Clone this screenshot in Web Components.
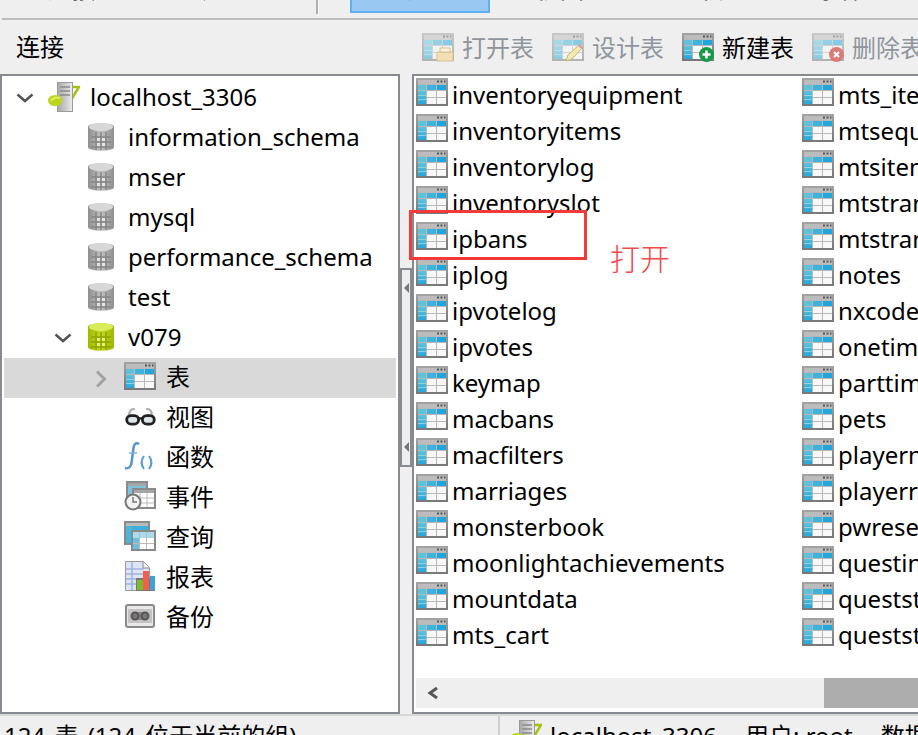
<!DOCTYPE html>
<html>
<head>
<meta charset="utf-8">
<style>
  html, body { margin: 0; height: 100%; overflow: hidden; background: #efefef; }
  body { font-family: "Noto Sans", "Noto Sans CJK SC", sans-serif; font-size: 24px; color: #000; }
</style>
</head>
<body>
<nav-app></nav-app>
<script>
const TABLE_ICON = (dim) => `
  <svg width="32" height="28" viewBox="0 0 32 28" style="opacity:${dim ? .5 : 1}">
    <defs>
      <linearGradient id="frame" x1="0" y1="0" x2="0" y2="1"><stop offset="0" stop-color="#a3a3a3"/><stop offset="1" stop-color="#777"/></linearGradient>
      <linearGradient id="leftcol" x1="0" y1="0" x2="0" y2="1"><stop offset="0" stop-color="#5fc2dc"/><stop offset="1" stop-color="#2aa6d8"/></linearGradient>
    </defs>
    <rect width="32" height="28" fill="url(#frame)"/>
    <rect x="2" y="2" width="28" height="4" fill="#bcbcbc"/>
    <path d="M21 3.500h2M24.500 3.500h2M28 3.500h1.500" stroke="#555" stroke-width="2"/>
    <rect x="2" y="6" width="28" height="20" fill="#b8b8b8"/>
    <rect x="2" y="7" width="8" height="5" fill="#5fc2dc"/>
    <rect x="11" y="7" width="9" height="5" fill="#3cb2dc"/>
    <rect x="21" y="7" width="9" height="5" fill="#1fa6dd"/>
    <rect x="2" y="13" width="8" height="13" fill="url(#leftcol)"/>
    <path d="M2 17.500h8M2 21.500h8" stroke="#8fd0e4"/>
    <rect x="11" y="13" width="9" height="6" fill="#f8f8f8"/>
    <rect x="21" y="13" width="9" height="6" fill="#f8f8f8"/>
    <rect x="11" y="20" width="9" height="6" fill="#f8f8f8"/>
    <rect x="21" y="20" width="9" height="6" fill="#f8f8f8"/>
  </svg>`;

const DB_ICON = (color) => {
  const c = color === 'green'
    ? { a: '#9cb800', m: '#c4dc22', b: '#d8ec5c', c: '#8ea400', h: '#e2f27a' }
    : { a: '#8e8e8e', m: '#c2c2c2', b: '#d8d8d8', c: '#858585', h: '#e4e4e4' };
  return `<svg width="26" height="30" viewBox="0 0 26 30">
    <defs><linearGradient id="cyl" x1="0" y1="0" x2="1" y2="0"><stop offset="0" stop-color="${c.a}"/><stop offset=".5" stop-color="${c.m}"/><stop offset="1" stop-color="${c.a}"/></linearGradient></defs>
    <path d="M0 5C0 0 26 0 26 5V25C26 30 0 30 0 25Z" fill="url(#cyl)"/>
    <ellipse cx="13" cy="5" rx="12" ry="4" fill="${c.b}"/>
    <path d="M8 10v18M13 10v18M18 10v18" stroke="${c.c}" stroke-width="1.500" fill="none"/>
    <path d="M3 15h20M3 20h20M3 25h20" stroke="${c.c}" stroke-width="1.500" fill="none"/>
    <path d="M9 16h3v3h-3zM14 16h3v3h-3zM9 21h3v3h-3zM14 21h3v3h-3z" fill="${c.h}"/>
  </svg>`;
};

const SERVER_ICON = (w, h) => `<svg width="${w}" height="${h}" viewBox="0 0 32 30">
    <defs><linearGradient id="tower" x1="0" y1="0" x2="1" y2="0"><stop offset="0" stop-color="#a8a8a8"/><stop offset=".6" stop-color="#cfcfcf"/><stop offset="1" stop-color="#eee"/></linearGradient></defs>
    <path d="M22 5h9l-8 13" fill="none" stroke="#a9c010" stroke-width="2.500"/>
    <rect x="9.500" y="0.500" width="15" height="29" fill="url(#tower)" stroke="#9a9a9a"/>
    <path d="M12 5h10M12 9h10M12 13h10" stroke="#8a8a8a" stroke-width="1.500"/>
    <ellipse cx="7" cy="18.500" rx="7" ry="5.500" fill="#bcd61a"/>
    <path d="M3 19c2-3 5-4 9-3" stroke="#e2ef70" stroke-width="1.500" fill="none"/>
  </svg>`;

const CHEVRON_DOWN = `<svg width="18" height="10" viewBox="0 0 18 10"><path d="M1.500 1.500l7.500 6.500 7.500-6.500" fill="none" stroke="#555" stroke-width="2.500"/></svg>`;
const CHEVRON_RIGHT = `<svg width="12" height="18" viewBox="0 0 12 18"><path d="M2 1.500l7.500 7.500-7.500 7.500" fill="none" stroke="#a2a2a2" stroke-width="3"/></svg>`;

const ICONS = {
  server: SERVER_ICON(32, 30),
  db: DB_ICON('gray'),
  dbgreen: DB_ICON('green'),
  table: TABLE_ICON(false),
  view: `<svg width="31" height="19" viewBox="0 0 32 20">
      <path d="M4 9c0-4 2-7 6-7M28 9c0-4-2-7-6-7" stroke="#b0b0b0" stroke-width="2.500" fill="none"/>
      <rect x="1.500" y="9" width="12.500" height="9" rx="4.500" fill="#dfe6ea" stroke="#222" stroke-width="3"/>
      <rect x="18" y="9" width="12.500" height="9" rx="4.500" fill="#dfe6ea" stroke="#222" stroke-width="3"/>
      <path d="M14 12h4" stroke="#222" stroke-width="2.500"/>
    </svg>`,
  func: `<svg width="32" height="30" viewBox="0 0 32 30">
      <path d="M15 3c-3-2-5 0-5.500 4L7.500 22c-.5 4-3 6-6.500 5" fill="none" stroke="#5796cc" stroke-width="2.500"/>
      <path d="M5 12h8" stroke="#7fb0dc" stroke-width="1.500"/>
      <path d="M20 15c-3 4-3 9 0 13M25 15c3 4 3 9 0 13" fill="none" stroke="#5a9bd0" stroke-width="2"/>
    </svg>`,
  event: `<svg width="32" height="30" viewBox="0 0 32 30">
      <rect x="3" y="1" width="20" height="18" fill="#fff" stroke="#8a8a8a" stroke-width="2"/>
      <rect x="4" y="2" width="18" height="3" fill="#a5a5a5"/>
      <rect x="4" y="5" width="18" height="3" fill="#7cc4dc"/>
      <rect x="4" y="8" width="5" height="10" fill="#7cc4dc"/>
      <rect x="9" y="8" width="22" height="19" fill="#fff" stroke="#8a8a8a" stroke-width="2"/>
      <rect x="10" y="9" width="20" height="3" fill="#a5a5a5"/>
      <path d="M16 12v14M23 12v14M10 17h20M10 22h20" stroke="#bbb"/>
      <circle cx="9" cy="21" r="7.500" fill="#f2f2f2" stroke="#777" stroke-width="2"/>
      <path d="M9 16v5h4" stroke="#777" stroke-width="1.500" fill="none"/>
    </svg>`,
  query: `<svg width="32" height="30" viewBox="0 0 32 30">
      <rect x="0" y="0" width="26" height="24" fill="#8a8a8a"/>
      <rect x="2" y="2" width="22" height="3" fill="#bbb"/>
      <rect x="2" y="5" width="22" height="17" fill="#f4f4f4"/>
      <rect x="2" y="5" width="22" height="5" fill="#3cb0dc"/>
      <rect x="2" y="5" width="6" height="17" fill="#4cb6da"/>
      <rect x="7" y="9" width="25" height="21" fill="#8a8a8a"/>
      <rect x="9" y="11" width="21" height="17" fill="#fff"/>
      <rect x="9" y="11" width="21" height="6" fill="#a8dcec"/>
      <rect x="9" y="17" width="6" height="11" fill="#6cc0dc"/>
      <path d="M15.500 11v17M22.500 11v17M9 22.500h21" stroke="#bbb"/>
    </svg>`,
  report: `<svg width="30" height="30" viewBox="0 0 30 30">
      <path d="M0.500 0.500h18l6 6v23H0.500z" fill="#dde4f4" stroke="#9a9a9a"/>
      <path d="M18 1v6h6" fill="#f4f6fa" stroke="#888"/>
      <path d="M1 8h18M1 13h18M1 18h18M1 23h18M7 1v28" stroke="#9fb2dd" stroke-width="1.500"/>
      <rect x="11" y="17" width="19" height="13" fill="#777"/>
      <rect x="12" y="19" width="6" height="10" fill="#7eb82c"/>
      <rect x="18" y="10" width="6" height="19" fill="#f0604c"/>
      <rect x="25" y="15" width="5" height="14" fill="#3ea2d8"/>
    </svg>`,
  backup: `<svg width="30" height="24" viewBox="0 0 30 24">
      <rect x="1" y="1" width="28" height="22" rx="2" fill="#e8e8e8" stroke="#8a8a8a" stroke-width="2"/>
      <rect x="3" y="5" width="24" height="14" fill="#c4c2c2"/>
      <rect x="9" y="8" width="12" height="8" fill="#8a8888"/>
      <circle cx="10" cy="12" r="3.500" fill="#777" stroke="#555" stroke-width="2"/>
      <circle cx="20" cy="12" r="3.500" fill="#777" stroke="#555" stroke-width="2"/>
    </svg>`
};

const OVERLAY = {
  open: `<svg width="18" height="15" viewBox="0 0 18 15" class="ov"><path d="M1 5h16v9H1z" fill="#f2dfb4" stroke="#d6c08e"/><path d="M4 1h10v4H4z" fill="#fbf3dc" stroke="#d6c08e"/></svg>`,
  design: `<svg width="19" height="19" viewBox="0 0 19 19" class="ov"><path d="M1 18l2-6L14 2l3 3L7 16z" fill="#f4e8b4" stroke="#c9b670"/><path d="M14 2l3 3" stroke="#e89090" stroke-width="2"/></svg>`,
  add: `<svg width="15" height="15" viewBox="0 0 15 15" class="ov"><circle cx="7.500" cy="7.500" r="7.500" fill="#169a45"/><path d="M7.500 3.500v8M3.500 7.500h8" stroke="#fff" stroke-width="2.500"/></svg>`,
  del: `<svg width="15" height="15" viewBox="0 0 15 15" class="ov"><circle cx="7.500" cy="7.500" r="7.500" fill="#dc7a7a"/><path d="M5 5l5 5M10 5l-5 5" stroke="#fff" stroke-width="2"/></svg>`
};

class TopTabs extends HTMLElement {
  constructor() {
    super();
    this.attachShadow({ mode: 'open' });
    this.shadowRoot.innerHTML = `
      <style>
        :host { display: flex; align-items: flex-start; height: 18px; border-bottom: 2px solid #bdbdbd; margin-left: 2px; overflow: hidden; white-space: nowrap; }
        .t { flex: none; width: 48px; line-height: 28px; margin-top: -25px; }
        .sep { flex: none; width: 2px; height: 14px; background: #b0b0b0; margin-left: 90px; box-shadow: 1px 0 0 #fff; }
        .active { flex: none; box-sizing: border-box; width: 140px; height: 13px; margin-left: 32px; background: #99c9f3; border: 2px solid #5eb0f0; border-top: 0; overflow: hidden; padding-left: 51px; }
        .active .t { display: block; }
      </style>
      <span class="t" style="margin-left:46px">连接</span>
      <span class="t" style="margin-left:82px">用户</span>
      <div class="sep"></div>
      <div class="active"><span class="t">表</span></div>
      <span class="t" style="margin-left:46px">视图</span>
      <span class="t" style="margin-left:101px">函数</span>
      <span class="t" style="margin-left:83px">事件</span>
    `;
  }
}

class ToolButton extends HTMLElement {
  constructor() {
    super();
    this.attachShadow({ mode: 'open' });
    const kind = this.getAttribute('kind');
    const on = this.hasAttribute('on');
    this.shadowRoot.innerHTML = `
      <style>
        :host { display: flex; align-items: center; gap: 8px; flex: none; color: ${on ? '#000' : '#8f959c'}; font-size: 24px; white-space: nowrap; }
        .ic { position: relative; width: 32px; height: 28px; display: block; flex: none; margin-top: -1px; }
        .ic svg:first-child { display: block; }
        .ov { position: absolute; right: 0; bottom: -1px; }
        .t { line-height: 28px; padding-top: 2px; }
      </style>
      <span class="ic">${TABLE_ICON(!on)}${OVERLAY[kind]}</span><span class="t"><slot></slot></span>
    `;
  }
}

class ToolBar extends HTMLElement {
  constructor() {
    super();
    this.attachShadow({ mode: 'open' });
    this.shadowRoot.innerHTML = `
      <style>
        :host { display: flex; align-items: center; height: 54px; overflow: hidden; }
        .title { width: 422px; padding: 0 0 4px 16px; box-sizing: border-box; flex: none; font-size: 24px; }
        .btns { display: flex; gap: 18px; }
      </style>
      <div class="title">连接</div>
      <div class="btns"><slot></slot></div>
    `;
  }
}

class TreeRow extends HTMLElement {
  constructor() {
    super();
    this.attachShadow({ mode: 'open' });
    const level = +this.getAttribute('level');
    const arrow = this.getAttribute('arrow');
    const icon = this.getAttribute('icon');
    this.shadowRoot.innerHTML = `
      <style>
        :host { display: flex; align-items: center; box-sizing: border-box; height: 40px; padding-bottom: 4px; white-space: nowrap; font-size: 24px; }
        :host([selected]) { background: #d9d9d9; }
        .arrow { width: 18px; display: flex; justify-content: center; flex: none; margin-left: ${[12, 50, 88][level]}px; margin-top: ${arrow === 'right' ? 6 : 4}px; }
        .icon { width: 32px; display: flex; justify-content: center; flex: none; margin-left: ${level === 1 ? 13 : 14}px; margin-top: ${level < 2 ? 2 : 0}px; }
        .label { margin-left: ${level === 1 ? 11 : 10}px; margin-bottom: ${level === 2 ? 2 : 0}px; }
      </style>
      <span class="arrow">${arrow === 'down' ? CHEVRON_DOWN : arrow === 'right' ? CHEVRON_RIGHT : ''}</span>
      <span class="icon">${ICONS[icon]}</span>
      <span class="label"><slot></slot></span>
    `;
  }
}

class TreePanel extends HTMLElement {
  constructor() {
    super();
    this.attachShadow({ mode: 'open' });
    this.shadowRoot.innerHTML = `
      <style>
        :host { display: block; width: 400px; flex: none; box-sizing: border-box; border: 2px solid #868a91; background: #fff; padding: 2px 2px 0; overflow: hidden; }
      </style>
      <slot></slot>
    `;
  }
}

class SplitHandle extends HTMLElement {
  constructor() {
    super();
    this.attachShadow({ mode: 'open' });
    this.shadowRoot.innerHTML = `
      <style>
        :host { display: block; width: 12px; flex: none; padding-top: 194px; }
        .grip { height: 199px; box-sizing: border-box; border: 2px solid #868a91; background: #efefef; display: flex; flex-direction: column; justify-content: space-between; align-items: center; padding: 13px 0; }
        i { width: 0; height: 0; border: 5px solid transparent; border-left: 0; border-right: 5px solid #777; }
      </style>
      <div class="grip"><i></i><i></i></div>
    `;
  }
}

class TableItem extends HTMLElement {
  constructor() {
    super();
    this.attachShadow({ mode: 'open' });
    this.shadowRoot.innerHTML = `
      <style>
        :host { display: flex; align-items: center; gap: 4px; height: 36px; white-space: nowrap; font-size: 24px; }
        svg { display: block; flex: none; margin-bottom: 4px; }
      </style>
      ${TABLE_ICON(false)}<span><slot></slot></span>
    `;
  }
}

class TableGrid extends HTMLElement {
  constructor() {
    super();
    this.attachShadow({ mode: 'open' });
    this.shadowRoot.innerHTML = `
      <style>
        :host { display: grid; grid-template-rows: repeat(16, 36px); grid-auto-flow: column; grid-auto-columns: 386px; padding: 0 0 0 2px; height: 0; flex: 1; overflow: hidden; background: #fff; }
      </style>
      <slot></slot>
    `;
  }
}

class HScroll extends HTMLElement {
  constructor() {
    super();
    this.attachShadow({ mode: 'open' });
    this.shadowRoot.innerHTML = `
      <style>
        :host { display: flex; height: 30px; margin: 0 0 4px 2px; background: #efefef; align-items: center; position: relative; flex: none; }
        svg { margin-left: 10px; }
        .thumb { position: absolute; left: 408px; right: 0; top: 0; bottom: 0; background: #adadad; }
      </style>
      <svg width="13" height="14" viewBox="0 0 13 14"><path d="M11 2L4 7l7 5" fill="none" stroke="#555" stroke-width="3"/></svg>
      <div class="thumb"></div>
    `;
  }
}

class ListPanel extends HTMLElement {
  constructor() {
    super();
    this.attachShadow({ mode: 'open' });
    this.shadowRoot.innerHTML = `
      <style>
        :host { display: flex; flex-direction: column; flex: 1; min-width: 0; box-sizing: border-box; border: 2px solid #868a91; border-right: 0; background: #fff; overflow: hidden; }
      </style>
      <slot></slot>
    `;
  }
}

class RedMark extends HTMLElement {
  constructor() {
    super();
    this.attachShadow({ mode: 'open' });
    this.shadowRoot.innerHTML = `
      <style>
        :host { position: absolute; left: 409px; top: 210px; width: 178px; height: 50px; box-sizing: border-box; border: 3px solid #f33a3a; display: block; }
        .note { position: absolute; left: 198px; top: 24px; font: 300 30px "Noto Sans CJK SC", sans-serif; color: #f04a4a; line-height: 40px; white-space: nowrap; }
      </style>
      <span class="note"><slot></slot></span>
    `;
  }
}

class StatusBar extends HTMLElement {
  constructor() {
    super();
    this.attachShadow({ mode: 'open' });
    this.shadowRoot.innerHTML = `
      <style>
        :host { display: flex; box-sizing: border-box; height: 21px; border-top: 2px solid #d8d8d8; overflow: hidden; white-space: nowrap; font-size: 24px; line-height: 40px; }
        .a { width: 500px; padding-left: 4px; box-sizing: border-box; flex: none; border-right: 2px solid #cfcfcf; word-spacing: 3px; }
        .b { padding-left: 10px; display: flex; gap: 8px; }
        .b svg { flex: none; margin-top: 4px; }
      </style>
      <div class="a">124 表 (124 位于当前的组)</div>
      <div class="b">${SERVER_ICON(32, 30)}<span>localhost_3306</span><span style="margin-left:20px">用户: root</span><span style="margin-left:20px">数据库: v079</span></div>
    `;
  }
}

class NavApp extends HTMLElement {
  constructor() {
    super();
    this.attachShadow({ mode: 'open' });
    const left = ['inventoryequipment','inventoryitems','inventorylog','inventoryslot','ipbans','iplog','ipvotelog','ipvotes','keymap','macbans','macfilters','marriages','monsterbook','moonlightachievements','mountdata','mts_cart'];
    const right = ['mts_items','mtsequence','mtsitems','mtstransfer','mtstransfercart','notes','nxcode','onetimelogin','parttime','pets','playernpcs','playerroom','pwreset','questinfo','queststatus','queststatusmobs'];
    const items = left.concat(right).map(n => `<table-item>${n}</table-item>`).join('');
    this.shadowRoot.innerHTML = `
      <style>
        :host { display: flex; flex-direction: column; height: 735px; width: 918px; position: relative; overflow: hidden; }
        .main { display: flex; height: 640px; flex: none; }
      </style>
      <top-tabs></top-tabs>
      <tool-bar>
        <tool-button kind="open">打开表</tool-button>
        <tool-button kind="design">设计表</tool-button>
        <tool-button kind="add" on>新建表</tool-button>
        <tool-button kind="del">删除表</tool-button>
      </tool-bar>
      <div class="main">
        <tree-panel>
          <tree-row level="0" arrow="down" icon="server">localhost_3306</tree-row>
          <tree-row level="1" icon="db">information_schema</tree-row>
          <tree-row level="1" icon="db">mser</tree-row>
          <tree-row level="1" icon="db">mysql</tree-row>
          <tree-row level="1" icon="db">performance_schema</tree-row>
          <tree-row level="1" icon="db">test</tree-row>
          <tree-row level="1" arrow="down" icon="dbgreen">v079</tree-row>
          <tree-row level="2" arrow="right" icon="table" selected>表</tree-row>
          <tree-row level="2" icon="view">视图</tree-row>
          <tree-row level="2" icon="func">函数</tree-row>
          <tree-row level="2" icon="event">事件</tree-row>
          <tree-row level="2" icon="query">查询</tree-row>
          <tree-row level="2" icon="report">报表</tree-row>
          <tree-row level="2" icon="backup">备份</tree-row>
        </tree-panel>
        <split-handle></split-handle>
        <list-panel>
          <table-grid>${items}</table-grid>
          <h-scroll></h-scroll>
        </list-panel>
      </div>
      <status-bar></status-bar>
      <red-mark>打开</red-mark>
    `;
  }
}

customElements.define('top-tabs', TopTabs);
customElements.define('tool-button', ToolButton);
customElements.define('tool-bar', ToolBar);
customElements.define('tree-row', TreeRow);
customElements.define('tree-panel', TreePanel);
customElements.define('split-handle', SplitHandle);
customElements.define('table-item', TableItem);
customElements.define('table-grid', TableGrid);
customElements.define('h-scroll', HScroll);
customElements.define('list-panel', ListPanel);
customElements.define('red-mark', RedMark);
customElements.define('status-bar', StatusBar);
customElements.define('nav-app', NavApp);
</script>
</body>
</html>
